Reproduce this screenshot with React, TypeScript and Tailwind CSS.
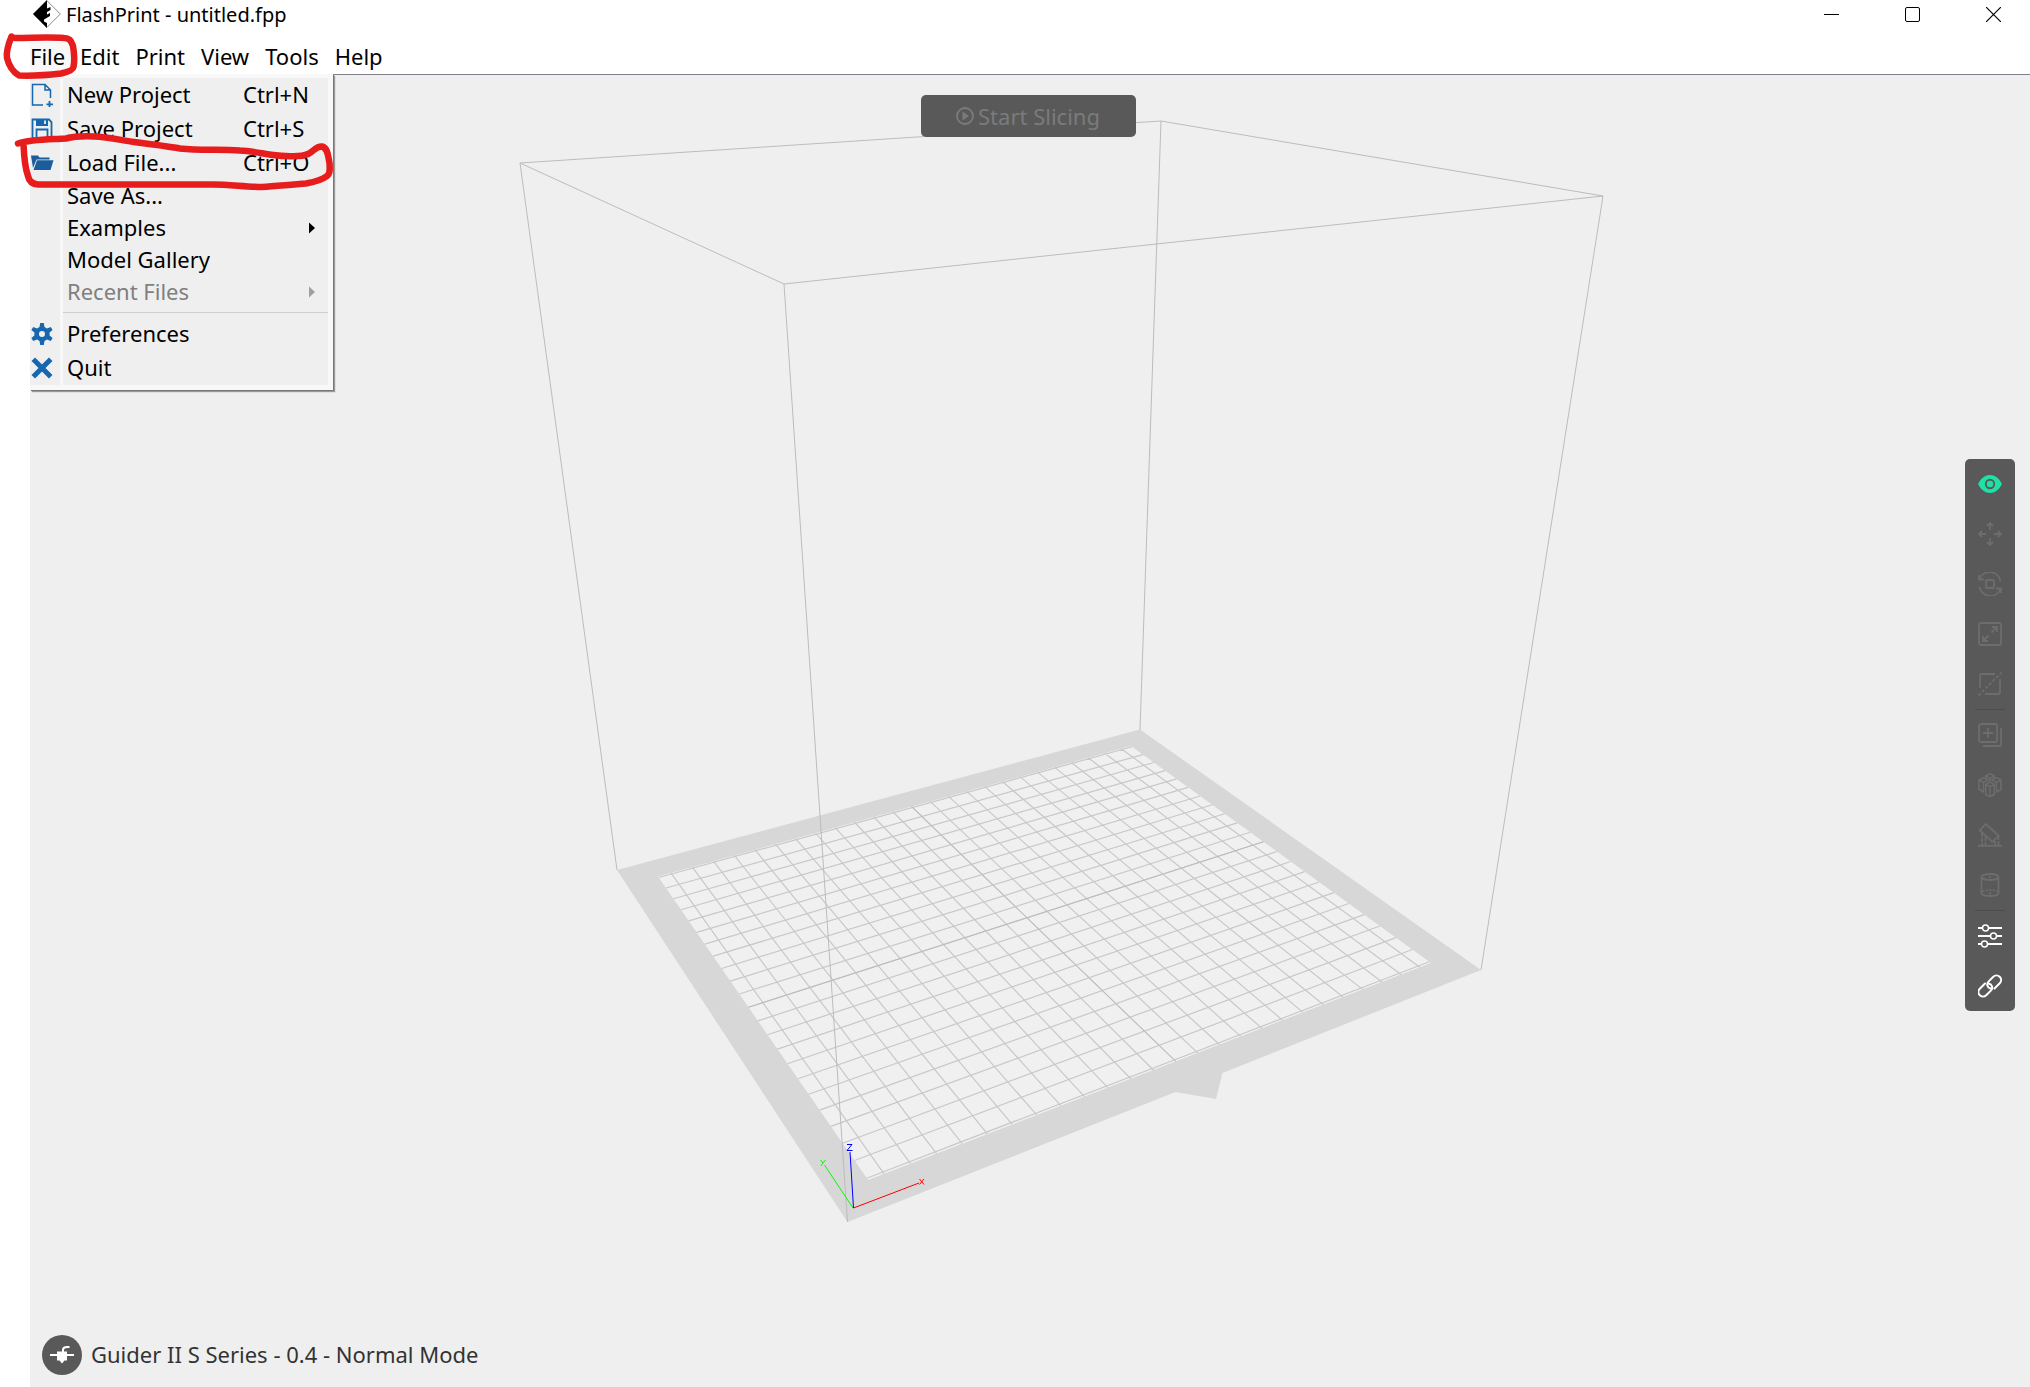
import React from "react";

type Pt = [number, number];

/* ---------- Build plate geometry ---------- */

const B: Pt = [868, 1180];
const R: Pt = [1431, 963];
const T: Pt = [1131, 746];
const L: Pt = [658, 876.5];
const HALF_U = 12.6;
const HALF_V = 11.1;

const d1: Pt = [R[0] - T[0], R[1] - T[1]];
const d2: Pt = [L[0] - T[0], L[1] - T[1]];
const sum: Pt = [B[0] - R[0] + T[0] - L[0], B[1] - R[1] + T[1] - L[1]];
const den = d1[0] * d2[1] - d2[0] * d1[1];
const g = (sum[0] * d2[1] - d2[0] * sum[1]) / den;
const h = (d1[0] * sum[1] - sum[0] * d1[1]) / den;

function project(u: number, v: number): Pt {
  const s = (u + HALF_U) / (2 * HALF_U);
  const t = (v + HALF_V) / (2 * HALF_V);
  const w = 1 + g * s + h * t;
  const at = (i: 0 | 1) =>
    (B[i] + s * (R[i] * (1 + g) - B[i]) + t * (L[i] * (1 + h) - B[i])) / w;
  return [at(0), at(1)];
}

function gridPath(us: number[], vs: number[]) {
  const seg = (a: Pt, b: Pt) =>
    `M${a[0].toFixed(2)} ${a[1].toFixed(2)}L${b[0].toFixed(2)} ${b[1].toFixed(2)}`;
  return (
    us.map((u) => seg(project(u, -HALF_V), project(u, HALF_V))).join("") +
    vs.map((v) => seg(project(-HALF_U, v), project(HALF_U, v))).join("")
  );
}

const range = (n: number) => Array.from({ length: 2 * n + 1 }, (_, i) => i - n);
const GRID = gridPath(range(12), range(11));
const AXES = gridPath([0], [0]);

function Scene() {
  return (
    <svg
      className="absolute inset-0 h-full w-full"
      viewBox="30 75 2000 1312"
      fill="none"
      aria-label="Build volume"
    >
      <path
        fill="#d7d7d7"
        d="M617 870L1140 729.5L1481 970L1222.500 1073L1216 1099L1175.500 1092L847.500 1222Z"
      />
      <path fill="#f0f0f0" d="M658 876.500L1131 746L1431 963L868 1180Z" />
      <path stroke="#c8c8c8" strokeWidth="1.200" d={GRID} />
      <path stroke="#bcbcbc" d={AXES} />
      <g stroke="#bcbcbc">
        <path d="M520 163L1161 121L1603 196L784 284Z" />
        <path d="M520 163L617 870" />
        <path d="M1161 121L1140 730" />
        <path d="M1603 196L1481 970" />
        <path d="M784 284L847.500 1222" />
      </g>
      <path stroke="#ff0000" d="M853.500 1208L919 1183M919.500 1179L924 1184.500M924 1179L919.500 1184.500" />
      <path stroke="#00ff00" d="M853 1208L824.500 1165M820.500 1160L823 1163L825.500 1160M823 1163L821 1166" />
      <path stroke="#0000ff" d="M853.500 1208L850 1152M847 1144.500H852L847 1150.500H852.500" />
    </svg>
  );
}

/* ---------- Icons ---------- */

function Icon({ children, className = "h-6 w-6" }: { children: React.ReactNode; className?: string }) {
  return (
    <svg
      className={className}
      viewBox="0 0 24 24"
      fill="none"
      stroke="currentColor"
      strokeWidth="1.800"
      aria-hidden="true"
    >
      {children}
    </svg>
  );
}

const NewFileIcon = () => (
  <Icon>
    <path strokeWidth="1.500" d="M13 22H2.500V1.500H15L20.500 7V15M15 1.500V7H20.500" />
    <path d="M19.500 18V24.500M16.500 21.300H23" />
  </Icon>
);
const SaveIcon = () => (
  <Icon>
    <path d="M2.500 2.500H19L21.500 5V21.500H2.500Z" />
    <path fill="currentColor" stroke="none" d="M6 2H18V9H6Z" />
    <path stroke="#efefef" d="M15 3.500V7" />
    <path d="M6.500 21V12.500H17.500V21" />
  </Icon>
);
const FolderIcon = () => (
  <Icon>
    <path fill="#1a5c9c" stroke="none" d="M1 4.500H8L9.500 6.500H19.500V8.500H6.500L3 17Z" />
    <path fill="#1a5c9c" stroke="none" d="M7 9.200H23.500L20.500 19H3.500Z" />
  </Icon>
);
const GearIcon = () => (
  <Icon>
    <path
      fill="currentColor"
      stroke="none"
      fillRule="evenodd"
      d="M10.200 1H13.800L14.500 5L17 6.400L20.800 5L22.600 8.100L19.600 10.600V13.400L22.600 15.900L20.800 19L17 17.600L14.500 19L13.800 23H10.200L9.500 19L7 17.600L3.200 19L1.400 15.900L4.400 13.400V10.600L1.400 8.100L3.200 5L7 6.400L9.500 5ZM12 9A3 3 0 1 0 12 15A3 3 0 1 0 12 9Z"
    />
  </Icon>
);
const QuitIcon = () => (
  <Icon>
    <path strokeWidth="5" d="M3.300 3.300L20.700 20.700M20.700 3.300L3.300 20.700" />
  </Icon>
);

const EyeIcon = () => (
  <Icon>
    <path
      fill="currentColor"
      stroke="none"
      d="M0 12C3 6 7.500 3 12 3S21 6 24 12C21 18 16.500 21 12 21S3 18 0 12Z"
    />
    <circle cx="12" cy="12" r="4.200" stroke="#595959" strokeWidth="1.900" />
  </Icon>
);
const MoveIcon = () => (
  <Icon>
    <path d="M12 8V1.200M9 4L12 1L15 4M12 16V22.800M9 20L12 23L15 20M8 12H1.200M4 9L1 12L4 15M16 12H22.800M20 9L23 12L20 15" />
  </Icon>
);
const RotateIcon = () => (
  <Icon>
    <rect x="8" y="8" width="8" height="8" rx="1" />
    <path d="M22.500 9A11 11 0 0 0 1.500 7M1 3V7.500H6M1.500 15A11 11 0 0 0 22.500 17M23 21V16.500H18" />
  </Icon>
);
const ScaleIcon = () => (
  <Icon>
    <rect x="1" y="1" width="22" height="22" rx="2" />
    <path d="M13.500 10.500L19 5M14 5H19V10M10.500 13.500L5 19M5 14V19H10" />
  </Icon>
);
const CutIcon = () => (
  <Icon>
    <path d="M2 16V4A2 2 0 0 1 4 2H17M22 7V20A2 2 0 0 1 20 22H7" />
    <path strokeDasharray="3 2" d="M0.500 23.500L23.500 0.500" />
  </Icon>
);
const CopyIcon = () => (
  <Icon>
    <rect x="1" y="1" width="18" height="18" rx="2" />
    <path d="M10 5V15M5 10H15M23 5V21A2 2 0 0 1 21 23H5" />
  </Icon>
);
const ArrangeIcon = () => (
  <Icon>
    <g strokeWidth="1.500" strokeLinejoin="round">
      <path d="M12 0.700L16.300 3L12 5.300L7.700 3Z" />
      <path d="M5.500 4.700L10 7L5.500 9.300L1 7ZM1 7V16.500L5.500 19V9.300" />
      <path d="M18.500 4.700L14 7L18.500 9.300L23 7ZM23 7V16.500L18.500 19V9.300" />
      <path d="M12 9L16.300 11.300L12 13.600L7.700 11.300ZM7.700 11.300V21.500L12 24L16.300 21.500V11.300M12 13.600V24M7.700 3V5.500M16.300 3V5.500M12 5.300V9" />
    </g>
  </Icon>
);
const SupportIcon = () => (
  <Icon>
    <path d="M7.800 1L20.500 12.500L14.500 19L1.800 7.500Z" />
    <path d="M0 22.800H24" />
    <path strokeDasharray="4 1" d="M4 10V22M7.500 14V22M17 18V22M20.500 13V22" />
  </Icon>
);
const CylinderIcon = () => (
  <Icon>
    <ellipse cx="12" cy="4" rx="8.500" ry="3" />
    <path d="M3.500 4V20C3.500 24 20.500 24 20.500 20V4" />
    <path strokeDasharray="2 1.500" d="M4.500 18.500Q12 15.500 19.500 18.500" />
    <path d="M12 3V5M12 19V21.500" />
  </Icon>
);
const SlidersIcon = () => (
  <Icon>
    <path d="M0 4H4.500M10.500 4H24M0 12H12.500M18.500 12H24M0 20H3.500M9.500 20H24" />
    <circle cx="7.500" cy="4" r="3" strokeWidth="1.500" />
    <circle cx="15.500" cy="12" r="3" strokeWidth="1.500" />
    <circle cx="6.500" cy="20" r="3" strokeWidth="1.500" />
  </Icon>
);
const LinkIcon = () => (
  <Icon>
    <g strokeLinecap="round" strokeWidth="2">
      <path d="M12.500 14.500C9 13.500 8.300 9.800 10.700 7.400L15 3C19.500 -1.500 26 4.500 21.700 9.300L16.500 14.500" />
      <path d="M10.500 9.500C14.500 10.500 15.200 14.200 12.800 16.600L8.500 21C4 25.500 -2.500 19.500 1.800 14.700L7 9.500" />
    </g>
  </Icon>
);

/* ---------- Chrome ---------- */

function TitleBar() {
  return (
    <header className="flex h-[30px] shrink-0 items-start pl-[33px]">
      <svg className="h-7 w-7 shrink-0" viewBox="0 0 28 28" aria-hidden="true">
        <path d="M14 0.700L27.300 14L14 27.300L0.700 14Z" fill="#fff" stroke="#8a8a8a" />
        <path
          fill="#000"
          d="M14 0V8.500L17.500 7V10L14 12V14.500L17 13V16L11 19.500V21.500L14 23V28L0 14Z"
        />
      </svg>
      <h1 className="ml-[5px] text-xl leading-[30px]">FlashPrint - untitled.fpp</h1>
      <div className="ml-auto flex gap-2">
        <button aria-label="Minimize" className="flex h-[29px] w-[73px] items-center justify-center">
          <span className="h-px w-[15px] bg-black" />
        </button>
        <button aria-label="Maximize" className="flex h-[29px] w-[73px] items-center justify-center">
          <span className="h-[15px] w-[15px] rounded-xs border border-black" />
        </button>
        <button aria-label="Close" className="flex h-[29px] w-[73px] items-center justify-center">
          <svg className="h-[15px] w-[15px]" viewBox="0 0 15 15" stroke="#000" strokeWidth="1.200" aria-hidden="true">
            <path d="M0 0L15 15M15 0L0 15" />
          </svg>
        </button>
      </div>
    </header>
  );
}

type Item = {
  label: string;
  icon?: React.ReactNode;
  keys?: string;
  submenu?: boolean;
  disabled?: boolean;
};

const FILE_ITEMS: Item[] = [
  { label: "New Project", keys: "Ctrl+N", icon: <NewFileIcon /> },
  { label: "Save Project", keys: "Ctrl+S", icon: <SaveIcon /> },
  { label: "Load File...", keys: "Ctrl+O", icon: <FolderIcon /> },
  { label: "Save As..." },
  { label: "Examples", submenu: true },
  { label: "Model Gallery" },
  { label: "Recent Files", submenu: true, disabled: true },
];
const APP_ITEMS: Item[] = [
  { label: "Preferences", icon: <GearIcon /> },
  { label: "Quit", icon: <QuitIcon /> },
];

function MenuItem({ item }: { item: Item }) {
  return (
    <li role="none">
      <button
        role="menuitem"
        disabled={item.disabled}
        className={`flex w-full items-center text-left ${item.icon ? "h-[34px]" : "h-8"} ${
          item.disabled ? "text-[#7f7f7f]" : "text-black"
        }`}
      >
        <span className="flex w-[33px] shrink-0 text-[#1767b0]">{item.icon}</span>
        <span className="flex-1 pb-0.5 pl-1 leading-7">{item.label}</span>
        {item.keys && <span className="w-[85px] pb-0.5 leading-7">{item.keys}</span>}
        {item.submenu && (
          <svg
            className={`mr-[13px] h-3 w-1.5 ${item.disabled ? "text-[#a0a0a0]" : "text-black"}`}
            viewBox="0 0 6 12"
            fill="currentColor"
            aria-hidden="true"
          >
            <path d="M0 0.500L6 6L0 11.500Z" />
          </svg>
        )}
      </button>
    </li>
  );
}

function FileMenu() {
  return (
    <div className="absolute top-full left-0 z-10 w-[303px] border-t-4 border-r-[5px] border-b-[5px] border-[#f8f8f8] shadow-[1px_1px_0_0_#777,2px_2px_1px_0_#999]">
      <ul
        role="menu"
        aria-label="File"
        className="bg-[linear-gradient(to_right,#efefef_30px,#f8f8f8_30px,#f8f8f8_33px,#efefef_33px)] text-[22px]"
      >
        {FILE_ITEMS.map((i) => (
          <MenuItem key={i.label} item={i} />
        ))}
        <li role="separator" className="flex h-[9px] items-center pl-[33px]">
          <span className="h-px w-full bg-[#cfcfcf]" />
        </li>
        {APP_ITEMS.map((i) => (
          <MenuItem key={i.label} item={i} />
        ))}
      </ul>
    </div>
  );
}

function MenuBar() {
  return (
    <nav className="flex h-11 shrink-0 items-stretch pl-[30px] text-[22px] leading-7">
      <div className="relative flex">
        <button aria-haspopup="menu" aria-expanded="true" className="mt-3 w-[42px] bg-[#f8f8f8] pb-1 text-left">
          File
        </button>
        <FileMenu />
      </div>
      <div className="flex gap-4 pt-3 pb-1 pl-2">
        <button>Edit</button>
        <button>Print</button>
        <button>View</button>
        <button>Tools</button>
        <button>Help</button>
      </div>
    </nav>
  );
}

const TOOL_GROUPS: { label: string; icon: React.ReactNode; tone: string }[][] = [
  [
    { label: "View", icon: <EyeIcon />, tone: "text-[#1fe0a5]" },
    { label: "Move", icon: <MoveIcon />, tone: "text-[#6d6d6d]" },
    { label: "Rotate", icon: <RotateIcon />, tone: "text-[#6d6d6d]" },
    { label: "Scale", icon: <ScaleIcon />, tone: "text-[#6d6d6d]" },
    { label: "Cut", icon: <CutIcon />, tone: "text-[#6d6d6d]" },
  ],
  [
    { label: "Duplicate", icon: <CopyIcon />, tone: "text-[#6d6d6d]" },
    { label: "Auto layout", icon: <ArrangeIcon />, tone: "text-[#6d6d6d]" },
    { label: "Supports", icon: <SupportIcon />, tone: "text-[#6d6d6d]" },
    { label: "Cylinder", icon: <CylinderIcon />, tone: "text-[#6d6d6d]" },
  ],
  [
    { label: "Settings", icon: <SlidersIcon />, tone: "text-white" },
    { label: "Connect", icon: <LinkIcon />, tone: "text-white" },
  ],
];

function ToolBar() {
  return (
    <div role="toolbar" aria-label="Tools" className="flex flex-col items-center rounded-[5px] bg-[#595959]">
      {TOOL_GROUPS.map((group, n) => (
        <React.Fragment key={n}>
          {n > 0 && <span className="h-px w-[30px] bg-[#4c4c4c]" />}
          {group.map((t) => (
            <button
              key={t.label}
              aria-label={t.label}
              className={`flex h-[50px] w-[50px] items-center justify-center ${t.tone}`}
            >
              {t.icon}
            </button>
          ))}
        </React.Fragment>
      ))}
    </div>
  );
}

function Annotations() {
  return (
    <svg
      className="pointer-events-none absolute top-0 left-0 z-20 h-[200px] w-[345px]"
      viewBox="0 0 345 200"
      fill="none"
      stroke="#e71c1c"
      strokeWidth="6.500"
      strokeLinecap="round"
      strokeLinejoin="round"
      aria-hidden="true"
    >
      <path d="M11.500 36.500C8 45 6 52 7 58C9 66 13 72 19 75.500C32 76 48 75 61 73.500C68 72 73 70 73.500 67C75 60 74 52 73 46C71 40 69 38 64 38C48 37 32 38 15 38" />
      <path d="M18 143.500C32 139 50 139.500 66 138.500C76 136 84 136 94 136.500C108 137 120 140 134 142C150 144 166 146 180 148.500C200 151 220 149 240 150.500C256 151 270 156 286 156C296 156.500 304 156 308 154C314 151 316 146 322 146.500C328 148 328 156 329.500 163C330 170 330 174 327 176C322 180 314 182 306 183.500C290 185 276 185.500 262 187C246 187 230 184.500 213 184.500H38C32 184 29 181 28 176C25 168 24 156 23.500 144" />
    </svg>
  );
}

export default function App() {
  return (
    <div className="relative flex min-h-screen flex-col bg-white font-['Noto_Sans',sans-serif] text-black">
      <TitleBar />
      <MenuBar />
      <main className="relative ml-[30px] flex flex-1 flex-col border-t border-[#7f7f8c] bg-[#efefef]">
        <Scene />
        <div className="relative flex justify-center pt-5 pr-1">
          <button
            disabled
            className="flex h-[42px] w-[215px] items-center justify-center gap-1 rounded-[5px] bg-[#595959] text-[22px] text-[#7b7b7b]"
          >
            <svg className="h-[18px] w-[18px]" viewBox="0 0 18 18" fill="none" stroke="currentColor" strokeWidth="1.800" aria-hidden="true">
              <circle cx="9" cy="9" r="8" />
              <path fill="currentColor" stroke="none" d="M6.500 4.500L13 9L6.500 13.500Z" />
            </svg>
            Start Slicing
          </button>
        </div>
        <div className="absolute inset-y-0 right-[15px] flex items-center pt-2">
          <ToolBar />
        </div>
        <footer className="relative mt-auto flex items-center gap-[9px] pb-3 pl-3">
          <button aria-label="Printer" className="flex h-10 w-10 items-center justify-center rounded-full bg-[#595959] text-white">
            <Icon>
              <path strokeWidth="2" d="M0 12H24M13 9V6.500Q13.500 4 17 4H19.500" />
              <path fill="currentColor" stroke="none" d="M7 8.500H17V17.500H14.500L12 20.500L9.500 17.500H7Z" />
            </Icon>
          </button>
          <span className="pb-0.5 text-[22px] text-[#333]">Guider II S Series - 0.4 - Normal Mode</span>
        </footer>
      </main>
      <Annotations />
    </div>
  );
}
